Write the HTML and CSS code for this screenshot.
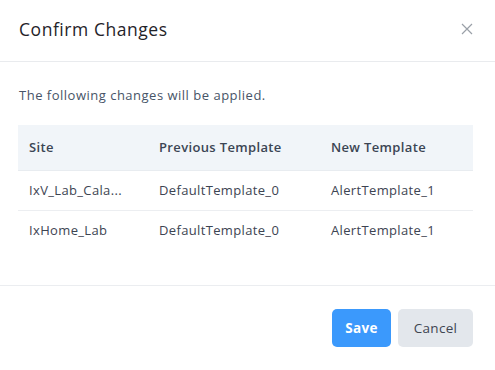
FILE: index.html
```html
<!DOCTYPE html>
<html>
<head>
<meta charset="utf-8">
<link rel="stylesheet" href="styles.css">
</head>
<body>
<div class="modal">
  <div class="modal-header">
    <h2 class="title">Confirm Changes</h2>
    <button class="close" aria-label="Close">
      <svg width="12" height="12" viewBox="0 0 12 12"><path d="M1 1L11 11M11 1L1 11" stroke="#9aa0a8" stroke-width="1.2" fill="none"/></svg>
    </button>
  </div>
  <div class="modal-body">
    <p class="intro">The following changes will be applied.</p>
    <table class="changes">
      <thead>
        <tr><th class="c1">Site</th><th class="c2">Previous Template</th><th class="c3">New Template</th></tr>
      </thead>
      <tbody>
        <tr><td>IxV_Lab_Cala...</td><td>DefaultTemplate_0</td><td>AlertTemplate_1</td></tr>
        <tr><td>IxHome_Lab</td><td>DefaultTemplate_0</td><td>AlertTemplate_1</td></tr>
      </tbody>
    </table>
  </div>
  <div class="modal-footer">
    <button class="btn btn-save">Save</button>
    <button class="btn btn-cancel">Cancel</button>
  </div>
</div>
</body>
</html>
```
FILE: styles.css
```css
* { box-sizing: border-box; }
html, body { margin: 0; padding: 0; background: #fff; }
body { font-family: "Open Sans", "DejaVu Sans", sans-serif; color: #334155; }
.modal { width: 495px; height: 370px; display: flex; flex-direction: column; }
.modal-header {
  height: 62px; display: flex; align-items: center; justify-content: space-between;
  padding: 0 22px 4px 19px; border-bottom: 1px solid #e9ebee;
}
.title { margin: 0; font-size: 17.5px; font-weight: 400; color: #1f2329; letter-spacing: 0.55px; }
.close { border: 0; background: none; padding: 0; width: 12px; height: 12px; display: flex; cursor: pointer; }
.modal-body { padding: 23px 22px 0 18px; height: 224px; border-bottom: 1px solid #ebedf0; }
.intro { margin: 0 0 20px 1px; font-size: 13px; color: #475467; height: 20px; line-height: 20px; letter-spacing: 0.5px; }
.changes { width: 455px; border-collapse: collapse; font-size: 13px; letter-spacing: 0.35px; }
.changes th { background: #f1f5f9; height: 45px; text-align: left; font-weight: 600; color: #3b4554; padding: 0 0 0 11px; border-bottom: 1px solid #e8ecf0; }
.changes td { height: 40px; padding: 0 0 0 11px; color: #3d4452; border-bottom: 1px solid #eceef1; }
.changes tbody tr:last-child td { border-bottom: 0; }
.c1 { width: 130px; }
.c2 { width: 172px; }
.modal-footer { display: flex; justify-content: flex-end; gap: 7px; padding: 23px 22px 0 0; }
.btn { font-family: inherit; font-size: 13.5px; border: 0; border-radius: 5px; height: 38px; cursor: pointer; letter-spacing: 0.3px; }
.btn-save { width: 59px; background: #3b99fc; color: #fff; font-weight: 700; }
.btn-cancel { width: 75px; background: #e3e7ec; color: #3f4551; }
```
